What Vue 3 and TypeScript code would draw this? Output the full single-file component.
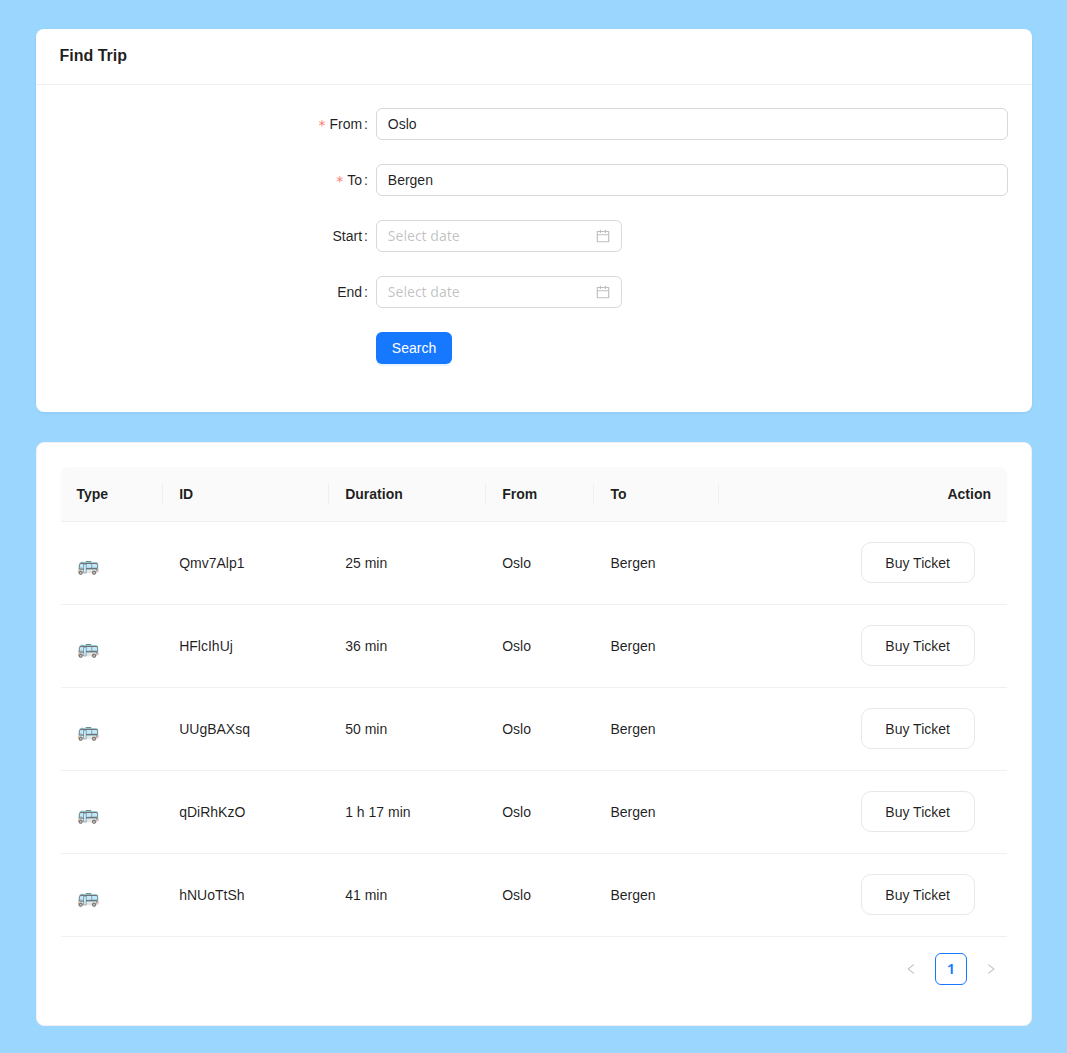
<script setup lang="ts">
import { ref } from 'vue'

interface Trip {
  id: string
  duration: string
  from: string
  to: string
}

const from = ref('Oslo')
const to = ref('Bergen')
const start = ref('')
const end = ref('')

const trips: Trip[] = [
  { id: 'Qmv7Alp1', duration: '25 min', from: 'Oslo', to: 'Bergen' },
  { id: 'HFlcIhUj', duration: '36 min', from: 'Oslo', to: 'Bergen' },
  { id: 'UUgBAXsq', duration: '50 min', from: 'Oslo', to: 'Bergen' },
  { id: 'qDiRhKzO', duration: '1 h 17 min', from: 'Oslo', to: 'Bergen' },
  { id: 'hNUoTtSh', duration: '41 min', from: 'Oslo', to: 'Bergen' },
]
</script>

<template>
  <main class="page">
    <section class="card search-card">
      <header class="card-head">Find Trip</header>
      <form class="form" @submit.prevent>
        <div class="field">
          <label class="label" for="from"><i class="star">*</i>From<span class="colon">:</span></label>
          <input id="from" v-model="from" class="input" type="text" />
        </div>
        <div class="field">
          <label class="label" for="to"><i class="star">*</i>To<span class="colon">:</span></label>
          <input id="to" v-model="to" class="input" type="text" />
        </div>
        <div class="field">
          <label class="label" for="start">Start<span class="colon">:</span></label>
          <div class="picker">
            <input id="start" v-model="start" placeholder="Select date" />
            <svg viewBox="64 64 896 896" width="14" height="14" fill="currentColor"><path d="M880 184H712v-64c0-4.400-3.600-8-8-8h-56c-4.400 0-8 3.600-8 8v64H384v-64c0-4.400-3.600-8-8-8h-56c-4.400 0-8 3.600-8 8v64H144c-17.700 0-32 14.300-32 32v664c0 17.700 14.300 32 32 32h736c17.700 0 32-14.300 32-32V216c0-17.700-14.300-32-32-32zm-40 656H184V460h656v380zM184 392V256h128v48c0 4.400 3.600 8 8 8h56c4.400 0 8-3.600 8-8v-48h256v48c0 4.400 3.600 8 8 8h56c4.400 0 8-3.600 8-8v-48h128v136H184z" /></svg>
          </div>
        </div>
        <div class="field">
          <label class="label" for="end">End<span class="colon">:</span></label>
          <div class="picker">
            <input id="end" v-model="end" placeholder="Select date" />
            <svg viewBox="64 64 896 896" width="14" height="14" fill="currentColor"><path d="M880 184H712v-64c0-4.400-3.600-8-8-8h-56c-4.400 0-8 3.600-8 8v64H384v-64c0-4.400-3.600-8-8-8h-56c-4.400 0-8 3.600-8 8v64H144c-17.700 0-32 14.300-32 32v664c0 17.700 14.300 32 32 32h736c17.700 0 32-14.300 32-32V216c0-17.700-14.300-32-32-32zm-40 656H184V460h656v380zM184 392V256h128v48c0 4.400 3.600 8 8 8h56c4.400 0 8-3.600 8-8v-48h256v48c0 4.400 3.600 8 8 8h56c4.400 0 8-3.600 8-8v-48h128v136H184z" /></svg>
          </div>
        </div>
        <div class="field">
          <span class="label"></span>
          <button class="search" type="submit">Search</button>
        </div>
      </form>
    </section>

    <section class="card table-card">
      <div class="row head">
        <div class="cell">Type</div>
        <div class="cell">ID</div>
        <div class="cell">Duration</div>
        <div class="cell">From</div>
        <div class="cell">To</div>
        <div class="cell action">Action</div>
      </div>
      <div v-for="trip in trips" :key="trip.id" class="row">
        <div class="cell"><span class="bus">🚌</span></div>
        <div class="cell">{{ trip.id }}</div>
        <div class="cell">{{ trip.duration }}</div>
        <div class="cell">{{ trip.from }}</div>
        <div class="cell">{{ trip.to }}</div>
        <div class="cell action"><button class="buy" type="button">Buy Ticket</button></div>
      </div>
      <nav class="pagination">
        <button class="page-btn" type="button" aria-label="Previous">
          <svg viewBox="64 64 896 896" width="12" height="12" fill="currentColor"><path d="M724 218.300V141c0-6.700-7.700-10.400-12.900-6.300L260.300 486.800a31.860 31.860 0 000 50.300l450.800 352.100c5.300 4.100 12.900.4 12.900-6.300v-77.300c0-4.900-2.300-9.600-6.100-12.600l-360-281 360-281.100c3.800-3 6.100-7.700 6.100-12.600z" /></svg>
        </button>
        <button class="page-btn current" type="button">1</button>
        <button class="page-btn" type="button" aria-label="Next">
          <svg viewBox="64 64 896 896" width="12" height="12" fill="currentColor"><path d="M765.700 486.800L314.900 134.700A7.970 7.970 0 00302 141v77.300c0 4.900 2.300 9.600 6.100 12.600l360 281.100-360 281.100c-3.900 3-6.100 7.700-6.100 12.600V883c0 6.700 7.700 10.400 12.900 6.300l450.800-352.100a31.960 31.960 0 000-50.400z" /></svg>
        </button>
      </nav>
    </section>
  </main>
</template>

<style>
body {
  background: #9bd6ff;
}
</style>

<style scoped>
* {
  box-sizing: border-box;
}
.page {
  display: flex;
  flex-direction: column;
  gap: 30px;
  width: 996px;
  margin: 0 auto;
  padding: 29px 0 27px;
  font: 14px/22px "Liberation Sans", Arial, sans-serif;
  color: rgba(0, 0, 0, 0.88);
}
.card {
  background: #fff;
  border-radius: 8px;
}
.search-card {
  height: 383px;
  box-shadow: 0 1px 2px 0 rgba(0, 0, 0, 0.03), 0 1px 6px -1px rgba(0, 0, 0, 0.02), 0 2px 4px 0 rgba(0, 0, 0, 0.02);
}
.card-head {
  height: 56px;
  padding: 0 24px;
  border-bottom: 1px solid #f0f0f0;
  font-size: 16px;
  font-weight: 600;
  line-height: 54px;
}
.form {
  display: flex;
  flex-direction: column;
  gap: 24px;
  padding: 23px 24px 0;
}
.field {
  display: flex;
  height: 32px;
}
.label {
  display: flex;
  align-items: center;
  justify-content: flex-end;
  flex: 0 0 316px;
}
.star {
  margin: 1px 4px 0 0;
  color: #ff7875;
  font: 14px/1 "DejaVu Sans", sans-serif;
}
.colon {
  margin: 0 7.500px 0 2px;
}
.input,
.picker {
  border: 1px solid #d9d9d9;
  border-radius: 6px;
  background: #fff;
  padding: 0 11px;
}
.input {
  flex: 1;
  min-width: 0;
  padding-left: 11.300px;
  font: inherit;
  color: inherit;
}
.picker {
  display: flex;
  align-items: center;
  width: 246px;
  color: rgba(0, 0, 0, 0.25);
}
.picker input {
  flex: 1;
  min-width: 0;
  padding: 0 0 0 .3px;
  border: 0;
  outline: 0;
  background: transparent;
  font: 14px/22px "Noto Sans", sans-serif;
}
.picker input::placeholder {
  color: rgba(0, 0, 0, 0.25);
}
button {
  font: inherit;
  color: inherit;
}
.search {
  width: 76px;
  height: 32px;
  padding: 0 0 0 1px;
  border: 0;
  border-radius: 6px;
  background: #1677ff;
  color: #fff;
  box-shadow: 0 2px 0 rgba(5, 145, 255, 0.1);
}
.table-card {
  height: 584px;
  padding: 24px;
  border: 1px solid #f0f0f0;
}
.row {
  display: grid;
  grid-template-columns: 102.500px 166px 157px 108.300px 124.700px 1fr;
  align-items: center;
  height: 83px;
  border-bottom: 1px solid #f0f0f0;
}
.cell {
  padding: 0 15.500px 0 16.200px;
}
.cell:first-child {
  padding-left: 16px;
}
.head {
  height: 55px;
  background: #fafafa;
  border-radius: 8px 8px 0 0;
  font-weight: 600;
}
.head .cell:not(.action) {
  border-right: 1px solid #f0f0f0;
}
.action {
  text-align: right;
}
.bus {
  display: block;
  margin: 3px 0 0 1px;
  font: 18px/22px "Noto Color Emoji", sans-serif;
  opacity: 0.88;
}
.buy {
  display: block;
  width: 114px;
  height: 41px;
  margin: -1px 16.500px 0 auto;
  padding: 0 0 0 .3px;
  border: 1px solid #e8e8e8;
  border-radius: 10px;
  background: #fff;
}
.pagination {
  display: flex;
  justify-content: flex-end;
  gap: 8px;
  margin-top: 16px;
}
.page-btn {
  display: flex;
  align-items: center;
  justify-content: center;
  width: 32px;
  height: 32px;
  padding: 0;
  border: 0;
  border-radius: 6px;
  background: transparent;
  color: rgba(0, 0, 0, 0.25);
}
.current {
  padding: 0 0 2px 1px;
  border: 1px solid #1677ff;
  background: #fff;
  color: #1677ff;
  font: 600 15px/22px "Noto Sans", sans-serif;
}
</style>
